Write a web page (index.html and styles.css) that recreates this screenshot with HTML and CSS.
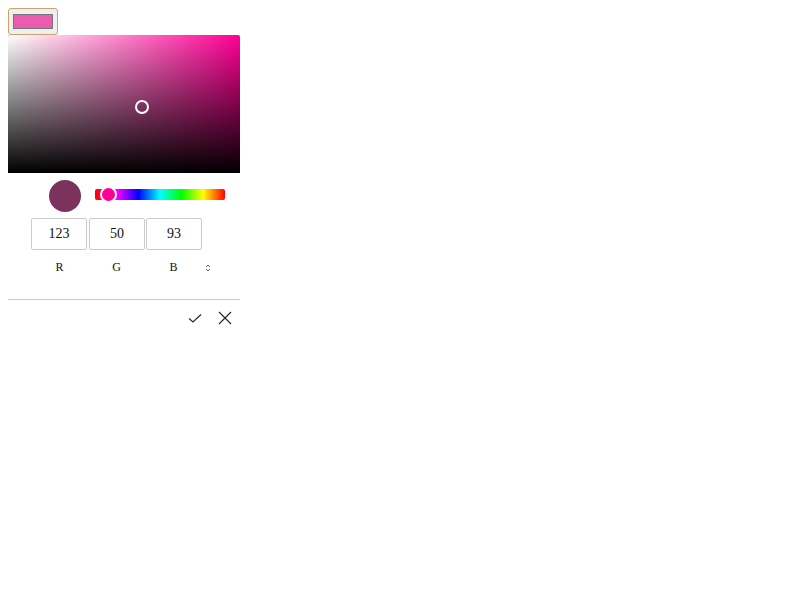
FILE: index.html
```html
<!DOCTYPE html>
<html>
<head>
<meta charset="utf-8">
<link rel="stylesheet" href="styles.css">
</head>
<body>
<div class="picker">
  <button class="trigger"><span class="swatch"></span></button>
  <div class="canvas">
    <div class="white"></div>
    <div class="black"></div>
    <div class="dot"></div>
  </div>
  <div class="controls">
    <div class="preview"></div>
    <div class="hue"><div class="thumb"></div></div>
  </div>
  <div class="fields">
    <div class="inputs">
      <input class="field" value="123">
      <input class="field" value="50">
      <input class="field" value="93">
    </div>
    <div class="labels">
      <span class="lab">R</span>
      <span class="lab">G</span>
      <span class="lab">B</span>
      <svg class="toggle" width="8" height="10" viewBox="0 0 8 10"><path d="M2 4 L4 2 L6 4 M2 6 L4 8 L6 6" fill="none" stroke="#666" stroke-width="1"/></svg>
    </div>
  </div>
  <div class="actions">
    <svg class="ok" width="16" height="16" viewBox="0 0 16 16"><path d="M2 8.5 L6 12 L14 4.5" fill="none" stroke="#222" stroke-width="1.1"/></svg>
    <svg class="cancel" width="16" height="16" viewBox="0 0 16 16"><path d="M2 2 L14 14 M14 2 L2 14" fill="none" stroke="#222" stroke-width="1.1"/></svg>
  </div>
</div>
</body>
</html>
```
FILE: styles.css
```css
html, body { margin: 0; padding: 0; background: #fff; }
body { padding: 8px; font-family: "Liberation Serif", serif; }
.picker { width: 232px; }
.trigger {
  display: flex; align-items: center; justify-content: center;
  width: 50px; height: 27px; padding: 0; margin: 0;
  border: 1px solid #c9a46c; border-radius: 3px; background: #efefef;
  box-sizing: border-box;
}
.swatch { display: block; width: 40px; height: 15px; box-sizing: border-box; border: 1px solid #777; background: #ea5dae; }
.canvas {
  position: relative; width: 232px; height: 138px;
  background: #ff0095; border-radius: 2px 2px 0 0; overflow: hidden;
}
.white { position: absolute; inset: 0; background: linear-gradient(to right, #fff, rgba(255,255,255,0)); }
.black { position: absolute; inset: 0; background: linear-gradient(to bottom, rgba(0,0,0,0), #000); }
.dot {
  position: absolute; left: 127px; top: 65px; width: 10px; height: 10px;
  border: 2px solid #fff; border-radius: 50%;
}
.controls { display: flex; align-items: center; gap: 14px; padding: 7px 15px 6px 41px; }
.preview { width: 32px; height: 32px; border-radius: 50%; background: rgb(123,50,93); }
.hue {
  position: relative; flex: 1; height: 11px; border-radius: 2px; margin-top: -4px;
  background: linear-gradient(to right, #f00 0%, #f0f 16.6%, #00f 33.3%, #0ff 50%, #0f0 66.6%, #ff0 83.3%, #f00 100%);
}
.thumb {
  position: absolute; left: 5px; top: -3px; width: 13px; height: 13px;
  border: 2px solid #fff; border-radius: 50%; background: #ff0095;
}
.fields { padding-left: 23px; padding-bottom: 15px; border-bottom: 1px solid #ccc; }
.inputs { display: flex; gap: 2px; }
.field {
  width: 56px; height: 32px; box-sizing: border-box; margin: 0;
  border: 1px solid #ccc; border-radius: 2px; text-align: center;
  font-family: "Liberation Serif", serif; font-size: 14px; color: #111; padding: 0;
}
.inputs .field:last-child { margin-left: -1px; }
.labels { display: flex; align-items: center; height: 34px; padding-top: 1px; box-sizing: border-box; }
.lab { width: 57px; text-align: center; font-family: "Liberation Serif", serif; font-size: 12px; color: #111; }
.toggle { margin-left: 2px; }
.actions { display: flex; justify-content: flex-end; gap: 14px; padding: 10px 7px 0 0; }
```
